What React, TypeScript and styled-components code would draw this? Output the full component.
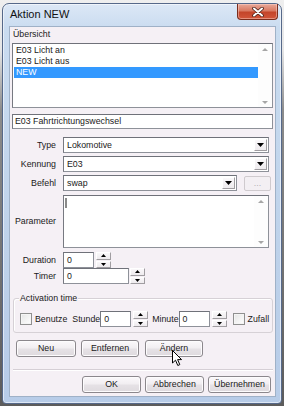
import React from 'react'
import styled, { createGlobalStyle } from 'styled-components'

const GlobalStyle = createGlobalStyle`
  html, body {
    margin: 0;
    padding: 0;
  }
  body {
    width: 284px;
    height: 406px;
    overflow: hidden;
    background: linear-gradient(to bottom, #efefef 0, #e6e6e6 50px, #8c8c8c 110px, #5c5c5c 100%);
    font-family: 'Liberation Sans', Arial, sans-serif;
    font-size: 8.8px;
    color: #1a1a1a;
  }
`

const Page = styled.div`
  padding: 3px 0 0 2px;
`

const Window = styled.div`
  box-sizing: border-box;
  width: 280px;
  height: 401px;
  display: flex;
  flex-direction: column;
  padding: 0 5px 6px 6px;
  border: 1px solid #56698a;
  border-radius: 7px 7px 4px 4px;
  background: linear-gradient(to bottom, #dce8f6 0, #cadcf0 24px, #bed2ea 60%, #b7cce8 100%);
  box-shadow: inset 0 0 0 1px rgba(255, 255, 255, 0.55);
`

const TitleBar = styled.div`
  height: 22px;
  display: flex;
  align-items: flex-start;
  justify-content: space-between;
`

const Title = styled.div`
  padding-left: 1px;
  line-height: 20px;
  font-size: 11px;
  color: #111;
`

const CloseButton = styled.div`
  box-sizing: border-box;
  width: 41px;
  height: 16px;
  margin-right: -2px;
  display: flex;
  align-items: center;
  justify-content: center;
  border: 1px solid #7a2d1c;
  border-top: none;
  border-radius: 0 0 4px 4px;
  background: linear-gradient(to bottom, #e9a999 0, #d97a62 45%, #c4452a 55%, #d2563a 100%);
  box-shadow: inset 0 0 0 1px rgba(255, 220, 210, 0.45);
`

const Client = styled.div`
  flex: 1;
  display: flex;
  flex-direction: column;
  padding: 2px 2px 0 2px;
  background: #f5f0f5;
  border: 1px solid #9fb1c7;
`

const Label = styled.div`
  line-height: 11px;
  padding-left: 1px;
`

const Sunken = styled.div`
  box-sizing: border-box;
  background: #fff;
  border: 1px solid #8e9199;
  border-top-color: #6f7179;
  border-left-color: #777981;
`

const ListBox = styled(Sunken)`
  margin-top: 3px;
  height: 65px;
  display: flex;
`

const ListItems = styled.div`
  flex: 1;
  padding: 1px 0 0 1px;
`

const ListItem = styled.div<{ $selected?: boolean }>`
  height: 11px;
  line-height: 11px;
  padding-left: 2px;
  background: ${p => (p.$selected ? '#3399ff' : 'transparent')};
  color: ${p => (p.$selected ? '#fff' : 'inherit')};
`

const ScrollBar = styled.div`
  width: 14px;
  display: flex;
  flex-direction: column;
  justify-content: space-between;
  align-items: center;
  padding: 4px 0 3px;
  background: #fdfdfd;
`

const TextField = styled(Sunken)`
  margin-top: 6px;
  height: 15px;
  line-height: 13px;
  padding-left: 2px;
`

const FormRow = styled.div<{ $top: number }>`
  margin-top: ${p => p.$top}px;
  display: grid;
  grid-template-columns: 44px auto;
  column-gap: 7px;
  justify-content: start;
`

const RowLabel = styled.div`
  align-self: center;
  text-align: right;
  line-height: 11px;
`

const Controls = styled.div`
  display: flex;
  align-items: center;
`

const Combo = styled(Sunken)<{ $width: number }>`
  width: ${p => p.$width}px;
  height: 16px;
  display: flex;
  align-items: center;
`

const ComboText = styled.div`
  flex: 1;
  padding-left: 3px;
  line-height: 12px;
`

const Raised = styled.div`
  box-sizing: border-box;
  display: flex;
  align-items: center;
  justify-content: center;
  background: linear-gradient(to bottom, #faf8fa, #eeebee);
  border: 1px solid;
  border-color: #ffffff #a09da1 #a09da1 #ffffff;
`

const DropButton = styled(Raised)`
  width: 13px;
  height: 12px;
  margin-right: 1px;
`

const EllipsisButton = styled.div`
  box-sizing: border-box;
  width: 27px;
  height: 15px;
  margin-left: 7px;
  display: flex;
  align-items: center;
  justify-content: center;
  border: 1px solid #cfcace;
  border-radius: 2px;
  background: #f3eff3;
  color: #b5b1b5;
  line-height: 10px;
`

const TextArea = styled(Sunken)`
  width: 206px;
  height: 53px;
  display: flex;
`

const TextAreaBody = styled.div`
  flex: 1;
  padding: 2px 0 0 1px;
`

const Caret = styled.div`
  width: 2px;
  height: 10px;
  background: #8a8a8a;
`

const NumberInput = styled(Sunken)<{ $width: number; $ml?: number }>`
  width: ${p => p.$width}px;
  height: 16px;
  margin-left: ${p => p.$ml ?? 0}px;
  padding-left: 3px;
  line-height: 14px;
`

const Spinner = styled.div<{ $ml?: number }>`
  width: 15px;
  height: 16px;
  margin-left: ${p => p.$ml ?? 2}px;
  display: flex;
  flex-direction: column;
  gap: 1px;
`

const SpinHalf = styled(Raised)`
  flex: 1;
`

const Group = styled.div`
  position: relative;
  margin: 14px 0 0 1px;
  height: 35px;
  box-sizing: border-box;
  padding: 12px 0 5px 6px;
  border: 1px solid #d6d1d6;
  border-radius: 3px;
  box-shadow: inset 1px 1px 0 #fff;
`

const Legend = styled.div`
  position: absolute;
  top: -6px;
  left: 5px;
  padding: 0 1px;
  line-height: 11px;
  background: #f5f0f5;
`

const GroupRow = styled.div`
  height: 16px;
  display: flex;
  align-items: center;
`

const CheckBox = styled.div<{ $ml?: number }>`
  box-sizing: border-box;
  width: 12px;
  height: 12px;
  margin-left: ${p => p.$ml ?? 0}px;
  border: 1px solid #8f8f8f;
  background: linear-gradient(135deg, #e4e4e4, #ffffff);
  box-shadow: inset 0 0 0 1px #f4f4f4;
`

const Text = styled.span<{ $ml?: number }>`
  margin-left: ${p => p.$ml ?? 0}px;
  line-height: 11px;
  white-space: nowrap;
`

const ButtonRow = styled.div<{ $top: number; $end?: boolean }>`
  margin-top: ${p => p.$top}px;
  display: flex;
  justify-content: ${p => (p.$end ? 'flex-end' : 'flex-start')};
  padding: ${p => (p.$end ? '0 2px 0 0' : '0 0 0 4px')};
`

const Button = styled.div<{ $width: number; $ml?: number }>`
  position: relative;
  box-sizing: border-box;
  width: ${p => p.$width}px;
  height: 17px;
  margin-left: ${p => p.$ml ?? 0}px;
  display: flex;
  align-items: center;
  justify-content: center;
  border: 1px solid #8b878c;
  border-radius: 3px;
  background: linear-gradient(to bottom, #fbf9fb 0, #f1eef1 48%, #e6e2e6 52%, #dedade 100%);
  box-shadow: inset 0 0 0 1px #fdfcfd;
  line-height: 11px;
`

const Separator = styled.div`
  margin: 12px 0 0 1px;
  height: 1px;
  background: #d5cfd5;
  border-bottom: 1px solid #ffffff;
`

const Cursor = styled.svg`
  position: absolute;
  left: 26px;
  top: 9px;
  z-index: 2;
`

const Arrow = ({ dir, color = '#000', w = 7, h = 4 }: { dir: 'up' | 'down'; color?: string; w?: number; h?: number }) => (
  <svg width={w} height={h} viewBox={`0 0 ${w} ${h}`}>
    <polygon
      points={dir === 'down' ? `0,0 ${w},0 ${w / 2},${h}` : `0,${h} ${w},${h} ${w / 2},0`}
      fill={color}
    />
  </svg>
)

const Spin = ({ ml }: { ml?: number }) => (
  <Spinner $ml={ml}>
    <SpinHalf>
      <Arrow dir="up" w={5} h={3} />
    </SpinHalf>
    <SpinHalf>
      <Arrow dir="down" w={5} h={3} />
    </SpinHalf>
  </Spinner>
)

const ComboBox = ({ value, width }: { value: string; width: number }) => (
  <Combo $width={width}>
    <ComboText>{value}</ComboText>
    <DropButton>
      <Arrow dir="down" />
    </DropButton>
  </Combo>
)

const App = () => {
  return (
    <Page>
      <GlobalStyle />
      <Window>
        <TitleBar>
          <Title>Aktion NEW</Title>
          <CloseButton>
            <svg width="12" height="10" viewBox="0 0 12 10">
              <path d="M2 1.5 L10 8.5 M10 1.5 L2 8.5" stroke="#4a2218" strokeWidth="3.6" strokeLinecap="round" />
              <path d="M2 1.5 L10 8.5 M10 1.5 L2 8.5" stroke="#ffffff" strokeWidth="2" strokeLinecap="round" />
            </svg>
          </CloseButton>
        </TitleBar>
        <Client>
          <Label>Übersicht</Label>
          <ListBox>
            <ListItems>
              <ListItem>E03 Licht an</ListItem>
              <ListItem>E03 Licht aus</ListItem>
              <ListItem $selected>NEW</ListItem>
            </ListItems>
            <ScrollBar>
              <Arrow dir="up" color="#a6a6a6" w={6} h={3} />
              <Arrow dir="down" color="#a6a6a6" w={6} h={3} />
            </ScrollBar>
          </ListBox>
          <TextField>E03 Fahrtrichtungswechsel</TextField>

          <FormRow $top={8}>
            <RowLabel>Type</RowLabel>
            <ComboBox value="Lokomotive" width={206} />
          </FormRow>
          <FormRow $top={3}>
            <RowLabel>Kennung</RowLabel>
            <ComboBox value="E03" width={206} />
          </FormRow>
          <FormRow $top={3}>
            <RowLabel>Befehl</RowLabel>
            <Controls>
              <ComboBox value="swap" width={174} />
              <EllipsisButton>...</EllipsisButton>
            </Controls>
          </FormRow>
          <FormRow $top={4}>
            <RowLabel>Parameter</RowLabel>
            <TextArea>
              <TextAreaBody>
                <Caret />
              </TextAreaBody>
              <ScrollBar>
                <Arrow dir="up" color="#a6a6a6" w={6} h={3} />
                <Arrow dir="down" color="#a6a6a6" w={6} h={3} />
              </ScrollBar>
            </TextArea>
          </FormRow>
          <FormRow $top={4}>
            <RowLabel>Duration</RowLabel>
            <Controls>
              <NumberInput $width={31}>0</NumberInput>
              <Spin />
            </Controls>
          </FormRow>
          <FormRow $top={0}>
            <RowLabel>Timer</RowLabel>
            <Controls>
              <NumberInput $width={66}>0</NumberInput>
              <Spin ml={1} />
            </Controls>
          </FormRow>

          <Group>
            <Legend>Activation time</Legend>
            <GroupRow>
              <CheckBox />
              <Text $ml={3}>Benutze</Text>
              <Text $ml={5}>Stunde</Text>
              <NumberInput $width={31}>0</NumberInput>
              <Spin />
              <Text $ml={4}>Minute</Text>
              <NumberInput $width={31}>0</NumberInput>
              <Spin />
              <CheckBox $ml={6} />
              <Text $ml={3}>Zufall</Text>
            </GroupRow>
          </Group>

          <ButtonRow $top={7}>
            <Button $width={60}>Neu</Button>
            <Button $width={58} $ml={5}>Entfernen</Button>
            <Button $width={58} $ml={6}>
              Ändern
              <Cursor width="11" height="17" viewBox="0 0 11 17">
                <path
                  d="M0.5 0.5 L0.5 13 L3.5 10.2 L5.8 15.5 L7.8 14.6 L5.6 9.6 L9.6 9.6 Z"
                  fill="#ffffff"
                  stroke="#000000"
                  strokeWidth="1"
                  strokeLinejoin="round"
                />
              </Cursor>
            </Button>
          </ButtonRow>

          <Separator />

          <ButtonRow $top={5} $end>
            <Button $width={59}>OK</Button>
            <Button $width={59} $ml={4}>Abbrechen</Button>
            <Button $width={63} $ml={4}>Übernehmen</Button>
          </ButtonRow>
        </Client>
      </Window>
    </Page>
  )
}

export default App
